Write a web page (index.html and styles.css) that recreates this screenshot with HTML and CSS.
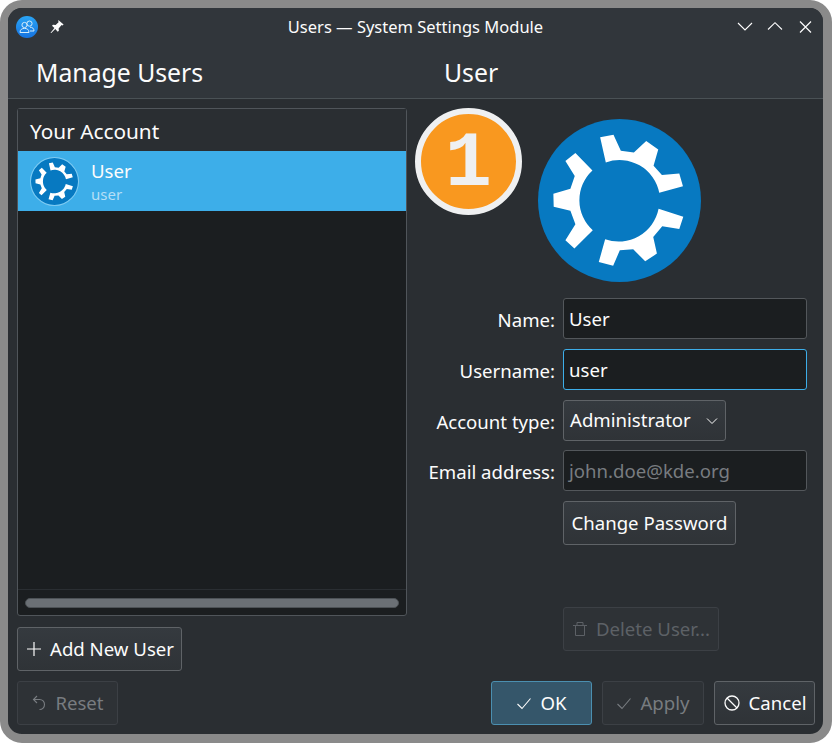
FILE: index.html
```html
<!DOCTYPE html>
<html lang="en">
  <head>
    <meta charset="UTF-8" />
    <meta name="viewport" content="width=device-width, initial-scale=1.0" />
    <title>Users - System Settings Module</title>
    <link rel="stylesheet" href="styles.css">
  </head>
  <body>
    <svg class="defs" width="0" height="0">
      <symbol id="kdeLogo" viewBox="415 87 488 488">
        <circle cx="659" cy="331" r="244" fill="#0779c1" />
        <path fill="#fff" d="M601 142L641 134L663 182L702 187L739 153L775 178L761 227L786 255L838 250L849 288L778 308A121 121 0 0 0 618 217Z" />
        <path fill="#fff" d="M776 356L850 380L838 416L787 408L760 440L771 490L736 513L700 477L660 480L640 526L597 515L616 447A122 122 0 0 0 776 356Z" />
        <path fill="#fff" d="M578 241L527 189L497 213L525 258L512 296L461 311L462 350L512 362L527 402L497 450L524 475L579 420A121 121 0 0 1 578 241Z" />
      </symbol>
    </svg>

    <div class="window">
      <div class="titlebar">
        <div class="titlebarLeft">
          <span class="appIcon">
            <svg width="16" height="14" viewBox="0 0 16 14" fill="none" stroke="#d4ecfb" stroke-width="1">
              <circle cx="5.5" cy="5" r="2.6" />
              <circle cx="10.5" cy="3.6" r="2.6" />
              <path d="M1 12.5C1 9.5 3 8.4 5.5 8.4S10 9.5 10 12.5Z" />
              <path d="M11 7.2C13.4 7.2 15 8.4 15 11H11" />
            </svg>
          </span>
          <svg class="pinIcon" width="16" height="16" viewBox="0 0 16 16" fill="#fcfcfc">
            <path d="M9.6 1.2L14.6 5.4L13.5 6.5L12.6 6L9.6 9.4L9.9 11.8L8.7 12.8L6.3 9.9L2 14.2L1.6 13.8L5.4 9L3 6.8L4 5.8L6.6 6L9.8 3.1L9 2Z" />
          </svg>
        </div>
        <div class="windowTitle">Users — System Settings Module</div>
        <div class="windowButtons">
          <svg width="16" height="16" viewBox="0 0 16 16" fill="none" stroke="#fcfcfc" stroke-width="1.1">
            <path d="M1 4L8 11L15 4" />
          </svg>
          <svg width="16" height="16" viewBox="0 0 16 16" fill="none" stroke="#fcfcfc" stroke-width="1.1">
            <path d="M1 10.5L8 3.7L15 10.5" />
          </svg>
          <svg width="16" height="16" viewBox="0 0 16 16" fill="none" stroke="#fcfcfc" stroke-width="1.2">
            <path d="M3 2.5L14 13.5M14 2.5L3 13.5" />
          </svg>
        </div>
      </div>

      <div class="headerBar">
        <div class="headerLeft">Manage Users</div>
        <div class="headerRight">User</div>
      </div>

      <div class="content">
        <div class="sidebar">
          <div class="listPanel">
            <div class="listHeading">Your Account</div>
            <div class="listBody">
              <div class="userRow">
                <svg class="rowAvatar" width="47" height="47"><use href="#kdeLogo" /></svg>
                <div class="rowText">
                  <div class="rowName">User</div>
                  <div class="rowLogin">user</div>
                </div>
              </div>
            </div>
            <div class="scrollArea"><div class="scrollHandle"></div></div>
          </div>
          <button class="btn addButton">
            <svg width="16" height="16" viewBox="0 0 16 16" fill="none" stroke="#fcfcfc" stroke-width="1.2">
              <path d="M8 1V15M1 8H15" />
            </svg>
            Add New User
          </button>
        </div>

        <div class="details">
          <div class="avatarWrap">
            <div class="stepBadge">1</div>
            <svg width="163" height="163"><use href="#kdeLogo" /></svg>
          </div>
          <div class="form">
            <label>Name:</label>
            <div class="field">User</div>
            <label>Username:</label>
            <div class="field focused">user</div>
            <label>Account type:</label>
            <div>
              <div class="btn combo">
                Administrator
                <svg width="14" height="14" viewBox="0 0 14 14" fill="none" stroke="#fcfcfc" stroke-width="1">
                  <path d="M2 4.5L7 9.5L12 4.5" />
                </svg>
              </div>
            </div>
            <label>Email address:</label>
            <div class="field placeholder">john.doe@kde.org</div>
            <div></div>
            <div><button class="btn passwordButton">Change Password</button></div>
          </div>
          <button class="btn disabled deleteButton">
            <svg width="16" height="16" viewBox="0 0 16 16" fill="none" stroke="#5d6166" stroke-width="1">
              <path d="M1 4.5H15M5 4.5V1.5H11V4.5M3.5 4.5V14.5H12.5V4.5" />
            </svg>
            Delete User...
          </button>
        </div>
      </div>

      <div class="footer">
        <button class="btn disabled resetButton">
          <svg width="16" height="16" viewBox="0 0 16 16" fill="none" stroke="#787c80" stroke-width="1.1">
            <path d="M6 1L2.5 4.5L6 8M2.5 4.5H8.5C11.5 4.5 13.5 6.5 13.5 9.5S11.5 14.5 8.5 14.5" />
          </svg>
          Reset
        </button>
        <div class="footerRight">
          <button class="btn okButton">
            <svg width="16" height="16" viewBox="0 0 16 16" fill="none" stroke="#fcfcfc" stroke-width="1.1">
              <path d="M1.5 9L6 13.5L14.5 3.5" />
            </svg>
            OK
          </button>
          <button class="btn disabled applyButton">
            <svg width="16" height="16" viewBox="0 0 16 16" fill="none" stroke="#787c80" stroke-width="1.1">
              <path d="M1.5 9L6 13.5L14.5 3.5" />
            </svg>
            Apply
          </button>
          <button class="btn cancelButton">
            <svg width="18" height="18" viewBox="0 0 18 18" fill="none" stroke="#fcfcfc" stroke-width="1.3">
              <circle cx="9" cy="9" r="7" />
              <path d="M4 4L14 14" />
            </svg>
            Cancel
          </button>
        </div>
      </div>
    </div>
  </body>
</html>
```

FILE: styles.css
```css
html,
body {
  margin: 0;
  height: 100%;
}
body {
  background: #fff;
  font-family: "Noto Sans", sans-serif;
  font-size: 18.6px;
  color: #fcfcfc;
}
.defs {
  position: absolute;
}
.window {
  box-sizing: border-box;
  width: 832px;
  height: 743px;
  border: 8px solid #8a8a8a;
  border-right-width: 9px;
  border-bottom-width: 9px;
  border-radius: 22px;
  background: #2a2e32;
  display: flex;
  flex-direction: column;
  overflow: hidden;
}
/* Title bar */
.titlebar {
  height: 38px;
  background: #31363b;
  display: flex;
  align-items: center;
  justify-content: space-between;
  padding: 0 10px 0 8px;
  position: relative;
}
.titlebarLeft {
  display: flex;
  align-items: center;
  gap: 11px;
}
.appIcon {
  width: 22px;
  height: 22px;
  border-radius: 50%;
  background: linear-gradient(#2aa5f5, #1673e0);
  display: flex;
  align-items: center;
  justify-content: center;
}
.windowTitle {
  position: absolute;
  left: 0;
  right: 0;
  top: 9px;
  line-height: 20px;
  text-align: center;
  font-size: 16.5px;
}
.windowButtons {
  display: flex;
  gap: 14px;
}
/* Header */
.headerBar {
  height: 52px;
  background: #31363b;
  border-bottom: 1px solid #4a5155;
  display: flex;
  font-size: 24.75px;
  line-height: 54px;
}
.headerLeft {
  width: 436px;
  padding-left: 28px;
  box-sizing: border-box;
}
/* Main area */
.content {
  flex: 1;
  display: flex;
  padding: 9px 16px 0 9px;
}
.sidebar {
  width: 390px;
  display: flex;
  flex-direction: column;
  gap: 11px;
  align-items: flex-start;
}
.listPanel {
  box-sizing: border-box;
  width: 390px;
  height: 508px;
  border: 1px solid #50555a;
  border-radius: 3px;
  display: flex;
  flex-direction: column;
  background: #1b1e20;
}
.listHeading {
  height: 42px;
  line-height: 44px;
  padding-left: 12px;
  font-size: 20.8px;
  background: #2a2e32;
  flex-shrink: 0;
}
.listBody {
  flex: 1;
}
.userRow {
  height: 60px;
  background: #3daee9;
  display: flex;
  align-items: center;
  gap: 13px;
  padding-left: 13px;
}
.rowAvatar {
  border-radius: 50%;
  box-shadow: 0 0 0 1px rgba(255, 255, 255, 0.35);
}
.rowText {
  padding-top: 2px;
}
.rowName {
  line-height: 24px;
}
.rowLogin {
  font-size: 15px;
  line-height: 22px;
  color: #b4dff6;
}
.scrollArea {
  height: 25px;
  border-top: 1px solid #2a2e32;
  display: flex;
  align-items: center;
  padding: 0 7px;
}
.scrollHandle {
  flex: 1;
  height: 10px;
  border-radius: 5px;
  background: #6b7075;
  border: 1px solid #4d5256;
  box-sizing: border-box;
}
/* Buttons */
.btn {
  box-sizing: border-box;
  height: 44px;
  border: 1px solid #5f6367;
  border-radius: 3px;
  background: linear-gradient(#353a3f, #2f3337);
  color: #fcfcfc;
  font-family: inherit;
  font-size: 18.6px;
  display: inline-flex;
  align-items: center;
  justify-content: center;
  gap: 8px;
  padding: 0 0 2px;
}
.btn svg {
  margin-top: 2px;
}
.btn.disabled {
  border-color: #3c4045;
  background: #2e3236;
  color: #787c80;
}
.addButton {
  width: 165px;
  padding-left: 1px;
}
/* Details column */
.details {
  flex: 1;
  position: relative;
  display: flex;
  flex-direction: column;
}
.avatarWrap {
  height: 179px;
  padding-top: 11px;
  padding-left: 131px;
  box-sizing: border-box;
}
.stepBadge {
  position: absolute;
  left: 8px;
  top: 0;
  width: 107px;
  height: 107px;
  box-sizing: border-box;
  border: 6px solid #eff0f1;
  border-radius: 50%;
  background: #f9981f;
  color: #eff0f1;
  font-family: "Liberation Mono", monospace;
  font-size: 78px;
  font-weight: 700;
  line-height: 101px;
  text-align: center;
}
.form {
  display: grid;
  grid-template-columns: 148px 244px;
  column-gap: 8px;
  row-gap: 9px;
  grid-template-rows: 42px 42px 41px 42px 44px;
  margin-top: 11px;
}
.form label {
  text-align: right;
  line-height: 43px;
}
.field {
  box-sizing: border-box;
  height: 41px;
  border: 1px solid #53575b;
  border-radius: 3px;
  background: #1b1e20;
  display: flex;
  align-items: center;
  padding-left: 5px;
}
.field.focused {
  border-color: #3daee9;
}
.field.placeholder {
  color: #787c80;
}
.combo {
  width: 163px;
  height: 41px;
  justify-content: flex-start;
  padding-left: 6px;
  gap: 14px;
  display: flex;
}
.passwordButton {
  width: 173px;
}
.deleteButton {
  position: absolute;
  left: 156px;
  top: 499px;
  width: 156px;
}
.btn.disabled.deleteButton {
  color: #5d6166;
}
/* Footer */
.footer {
  display: flex;
  justify-content: space-between;
  padding: 0 8px 9px 9px;
}
.footerRight {
  display: flex;
  gap: 10px;
}
.resetButton {
  width: 101px;
}
.okButton {
  width: 101px;
  border-color: #4b8fb0;
  background: #35566a;
}
.applyButton {
  width: 102px;
}
.cancelButton {
  width: 101px;
}
```
